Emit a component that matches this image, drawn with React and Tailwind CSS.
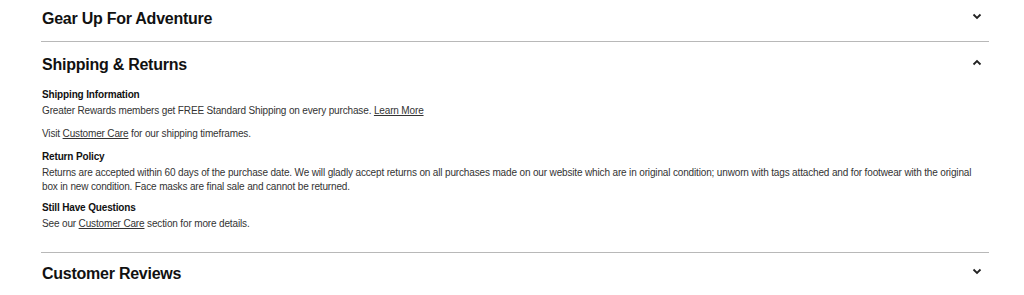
import React, { useState } from 'react'

function Chevron({ up }) {
  return (
    <svg width="10" height="7" viewBox="0 0 10 7" className="text-[#222]">
      <path
        d={up ? 'M1.5 5.5 L5 2 L8.5 5.5' : 'M1.5 1.5 L5 5 L8.5 1.5'}
        fill="none"
        stroke="currentColor"
        strokeWidth="1.8"
      />
    </svg>
  )
}

function Section({ title, open, onToggle, children, divider, head }) {
  return (
    <div className={divider ? 'border-b border-[#b8b8b8]' : ''}>
      <button
        onClick={onToggle}
        className={`w-full flex items-center justify-between text-left ${head}`}
      >
        <span className="pl-[1px] text-[16px] font-bold tracking-[-0.25px] text-[#111] font-['Liberation_Sans',Arial,sans-serif]">
          {title}
        </span>
        <span className="mr-[7px] mb-[5px] flex">
          <Chevron up={open} />
        </span>
      </button>
      {children && open && <div className="pb-[21px] pl-[1px]">{children}</div>}
    </div>
  )
}

export default function App() {
  const [open, setOpen] = useState('shipping')
  const toggle = (id) => setOpen(open === id ? null : id)

  return (
    <div className="bg-white min-h-[295px] pl-[41px] pr-[35px] overflow-hidden">
      <Section
        title="Gear Up For Adventure"
        open={open === 'gear'}
        onToggle={() => toggle('gear')}
        divider
        head="h-[41px] pb-[3px]"
      />
      <Section
        title="Shipping & Returns"
        open={open === 'shipping'}
        onToggle={() => toggle('shipping')}
        divider
        head="h-[46px]"
      >
        <div className="text-[10px] leading-[14px] tracking-[-0.15px] text-[#333] font-['Liberation_Sans',Arial,sans-serif]">
          <h4 className="font-bold text-[#111] mb-[2px]">Shipping Information</h4>
          <p>
            Greater Rewards members get FREE Standard Shipping on every purchase.{' '}
            <a href="#" className="underline">Learn More</a>
          </p>
          <p className="mt-[9px]">
            Visit <a href="#" className="underline">Customer Care</a> for our shipping timeframes.
          </p>
          <h4 className="font-bold text-[#111] mt-[9px] mb-[2px]">Return Policy</h4>
          <p>
            Returns are accepted within 60 days of the purchase date. We will gladly accept returns on all purchases made on our website which are in original condition; unworn with tags attached and for footwear with the original box in new condition. Face masks are final sale and cannot be returned.
          </p>
          <h4 className="font-bold text-[#111] mt-[7px] mb-[2px]">Still Have Questions</h4>
          <p>
            See our <a href="#" className="underline">Customer Care</a> section for more details.
          </p>
        </div>
      </Section>
      <Section
        title="Customer Reviews"
        open={open === 'reviews'}
        onToggle={() => toggle('reviews')}
        head="h-[41px]"
      />
    </div>
  )
}
